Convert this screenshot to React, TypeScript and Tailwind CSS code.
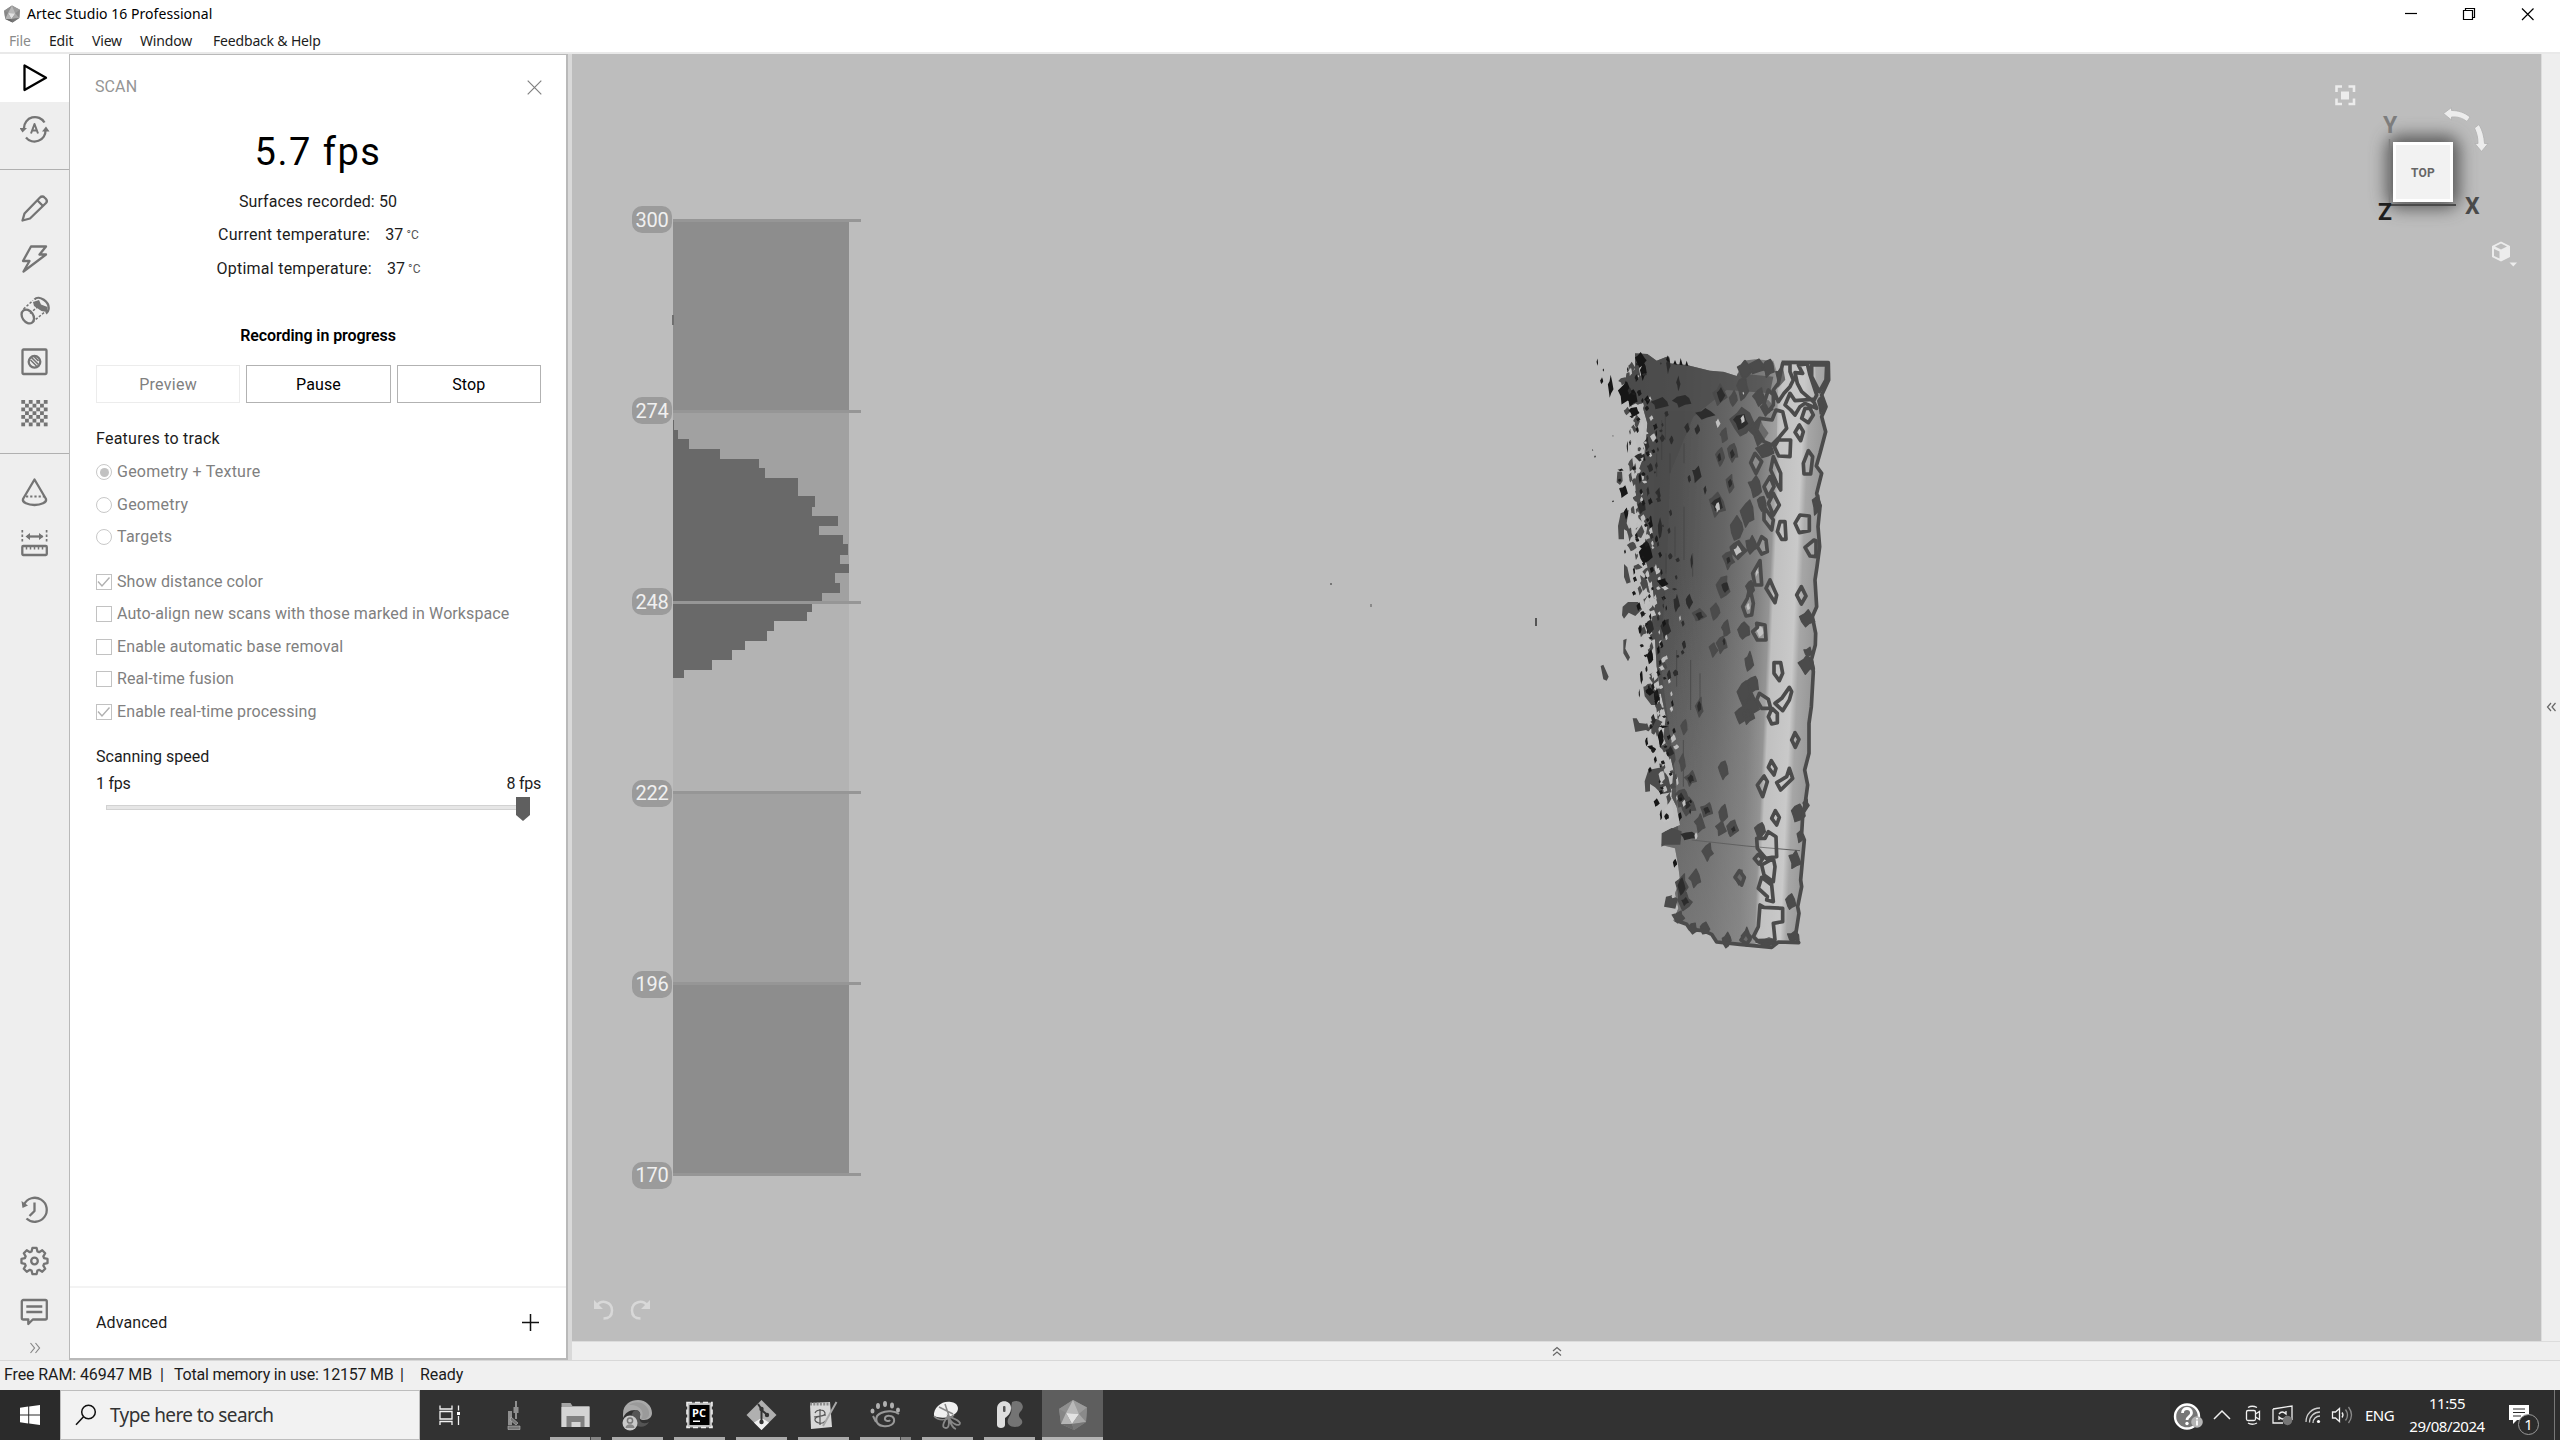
import React from "react";

type Pt = [number, number, number, number];

/* ---------- Toolbar icons ---------- */

function Ico({ children }: { children: React.ReactNode }) {
  return (
    <svg width="30" height="30" viewBox="0 0 30 30" fill="none" stroke="#747474" strokeWidth="2.300" strokeLinejoin="round">
      {children}
    </svg>
  );
}

const PlayIcon = () => (
  <Ico>
    <path d="M4.500 2.500v24.500l21.500-12.200z" stroke="#000" />
  </Ico>
);
const AutoIcon = () => (
  <Ico>
    <path d="M4 14A11 11 0 0 1 24.500 8.500M25.500 16A11 11 0 0 1 6 23.500" />
    <path d="M-0.500 14h7.500l-4.500 4.500zM22 17.500l7.500 0-3.500-5z" fill="#747474" stroke="none" />
    <path d="M11 19.500l3.500-9.500 3.500 9.500M12 16.500h5" strokeWidth="2" />
  </Ico>
);
const PencilIcon = () => (
  <Ico>
    <path d="M2.500 27.500L4.500 20.500 20 4.500a3 3 0 0 1 4.500 0l1.500 1.500a3 3 0 0 1 0 4L10 25.500z" />
    <path d="M17.500 7.500l5.500 5.500" />
  </Ico>
);
const BoltIcon = () => (
  <Ico>
    <path d="M11 2.500H26L19.500 10.500H26L3.500 27.500 9.500 17H3z" />
  </Ico>
);
const EraserIcon = () => (
  <Ico>
    <ellipse cx="7.800" cy="21.500" rx="5.500" ry="7.500" transform="rotate(-35 7.800 21.500)" />
    <path d="M14.500 4.500C19 -0.500 30 7 28.500 14.500c-0.300 1.800-1.200 3-2.500 4" />
    <path d="M13 7l6-2 2 4.500 6.500 2.500-0.500 5-5.500-1-7.500-5z" fill="#747474" stroke="none" />
    <path d="M3.500 14L13 5.500M12.500 27l13-10.500M10 18.500l8-7" strokeWidth="1.500" strokeDasharray="2.500 1.600" />
  </Ico>
);
const TargetIcon = () => (
  <Ico>
    <rect x="2.500" y="2.500" width="24" height="24.500" rx="1" />
    <circle cx="14.500" cy="14.800" r="5.800" />
    <path d="M10.500 13l6 6M11.500 10.500l7 7M14.500 10l4 4" strokeWidth="1.600" />
  </Ico>
);
const CheckerIcon = () => {
  const cells: React.ReactNode[] = [];
  for (let r = 0; r < 7; r++)
    for (let c = 0; c < 7; c++)
      if ((r + c) % 2 === 0) cells.push(<rect key={`${r}-${c}`} x={1.300 + c * 3.750} y={2 + r * 3.750} width="3.800" height="3.800" />);
  return (
    <svg width="30" height="30" viewBox="0 0 30 30" fill="#747474">
      {cells}
    </svg>
  );
};
const ConeIcon = () => (
  <Ico>
    <path d="M14.500 2.500L3 22c-1 3.500 5 6 11.500 6s12.500-2.500 11.500-6z" />
    <path d="M6 19.500h18" strokeWidth="2" strokeDasharray="2.200 2" />
  </Ico>
);
const MeasureIcon = () => (
  <Ico>
    <rect x="2.300" y="18" width="24.500" height="9" rx="1" />
    <path d="M6.500 18.500v3M10.500 18.500v3M14.500 18.500v3M18.500 18.500v3M22.500 18.500v3" strokeWidth="1.500" />
    <path d="M2.300 2v12.500M26.600 2v12.500" strokeDasharray="2.500 2" strokeWidth="1.700" />
    <path d="M7 8.500h15.500" />
    <path d="M5.500 8.500l4.500-3.500v7zM23.500 8.500l-4.500-3.500v7z" fill="#747474" stroke="none" />
  </Ico>
);
const HistoryIcon = () => (
  <Ico>
    <path d="M4 9.500A12 12 0 1 1 6.500 23.500" />
    <path d="M1.500 6l1 7 5.500-2.500z" fill="#747474" stroke="none" />
    <path d="M14.500 7.500v8.500l-5 5" />
  </Ico>
);
const GearIcon = () => {
  const pts: string[] = [];
  for (let i = 0; i < 8; i++) {
    const a = (i * Math.PI) / 4 - Math.PI / 2;
    const at = (d: number, r: number) => `${(14.500 + Math.cos(a + d) * r).toFixed(2)},${(15 + Math.sin(a + d) * r).toFixed(2)}`;
    pts.push(at(-0.300, 10), at(-0.160, 13.200), at(0.160, 13.200), at(0.300, 10));
  }
  return (
    <Ico>
      <polygon points={pts.join(" ")} />
      <circle cx="14.500" cy="15" r="3.300" />
    </Ico>
  );
};
const CommentIcon = () => (
  <Ico>
    <path d="M3.300 3h22a1.500 1.500 0 0 1 1.500 1.500v16.500a1.500 1.500 0 0 1-1.500 1.500H12.800l-4.500 4.500v-4.500H3.300A1.500 1.500 0 0 1 1.800 21V4.500A1.500 1.500 0 0 1 3.300 3z" />
    <path d="M6.300 9.500h16M6.300 15h16" />
  </Ico>
);

function Cell({ children }: { children: React.ReactNode }) {
  return <div className="flex h-[51.400px] w-full items-center justify-center">{children}</div>;
}

function Sidebar() {
  return (
    <nav className="flex w-[69px] shrink-0 flex-col items-center bg-[#eeeeee]">
      <div className="flex h-[48px] w-full items-center justify-center bg-white">
        <PlayIcon />
      </div>
      <div className="flex h-[67px] w-full justify-center pt-3">
        <AutoIcon />
      </div>
      <div className="h-px w-full bg-[#b0b0b0]" />
      <div className="mt-3 flex w-full flex-col">
        <Cell><PencilIcon /></Cell>
        <Cell><BoltIcon /></Cell>
        <Cell><EraserIcon /></Cell>
        <Cell><TargetIcon /></Cell>
        <Cell><CheckerIcon /></Cell>
      </div>
      <div className="mt-[14px] h-px w-full bg-[#b0b0b0]" />
      <div className="mt-3 flex w-full flex-col">
        <Cell><ConeIcon /></Cell>
        <Cell><MeasureIcon /></Cell>
      </div>
      <div className="mt-auto flex w-full flex-col">
        <Cell><HistoryIcon /></Cell>
        <Cell><GearIcon /></Cell>
        <Cell><CommentIcon /></Cell>
      </div>
      <div className="flex h-[22px] items-center pb-[2px]">
        <svg width="12" height="12" viewBox="0 0 12 12" fill="none" stroke="#858585" strokeWidth="1.200">
          <path d="M1.500 1l4 5-4 5M6.500 1l4 5-4 5" />
        </svg>
      </div>
    </nav>
  );
}

/* ---------- Scan panel ---------- */

function Radio({ label, on }: { label: string; on?: boolean }) {
  return (
    <div className="flex h-[32.500px] items-center tracking-[0.240px] text-[#808080]">
      <span className="mr-[5px] flex size-4 items-center justify-center rounded-full border border-[#c8c8c8]">
        {on && <span className="size-[9px] rounded-full bg-[#c2c2c2]" />}
      </span>
      {label}
    </div>
  );
}

function Check({ label, on }: { label: string; on?: boolean }) {
  return (
    <div className="flex h-[32.500px] items-center text-[#808080]">
      <span className="mr-[5px] flex size-4 items-center justify-center border border-[#c2c2c2]">
        {on && (
          <svg width="14" height="14" viewBox="0 0 14 14" fill="none" stroke="#b0b0b0" strokeWidth="1.400">
            <path d="M1 6.500l4 4.500 7.500-8.500" />
          </svg>
        )}
      </span>
      {label}
    </div>
  );
}

function Temp({ label }: { label: string }) {
  return (
    <div className="flex h-[34px] items-center justify-center pl-px">
      <span className="tracking-[0.250px]">{label}</span>
      <span className="ml-[15px]">37</span>
      <span className="ml-[3px] text-[12px] text-[#555]">°C</span>
    </div>
  );
}

function ScanPanel() {
  return (
    <section className="flex w-[499px] shrink-0 flex-col border-2 border-t border-l border-[#b9b9b9] bg-white text-[16px] leading-none tracking-[0.100px] text-[#1c1c1c]">
      <div className="flex h-[63px] items-center justify-between px-[25px] text-[#959595]">
        <span>SCAN</span>
        <svg width="15" height="15" viewBox="0 0 15 15" stroke="#808080" strokeWidth="1.200" className="-mr-px mt-px">
          <path d="M0.700 0.700l13.600 13.600M14.300 0.700L0.700 14.300" />
        </svg>
      </div>
      <div className="flex h-[66px] items-center justify-center pt-[2px] text-[38px] tracking-[1.500px] text-black">5.7 fps</div>
      <div className="flex h-[34px] items-center justify-center pt-px">Surfaces recorded: 50</div>
      <Temp label="Current temperature:" />
      <Temp label="Optimal temperature:" />
      <div className="mt-8 flex h-9 items-center justify-center font-semibold tracking-[-0.080px] text-black">Recording in progress</div>
      <div className="mt-[11px] flex gap-[6px] pr-[25px] pl-[26px]">
        <button className="h-[38px] flex-1 border border-[#ececec] pt-[2px] tracking-[0.300px] text-[#808080]">Preview</button>
        <button className="h-[38px] flex-1 border border-[#b2b2b2] pt-[2px] text-black">Pause</button>
        <button className="h-[38px] flex-1 border border-[#b2b2b2] pt-[2px] text-black">Stop</button>
      </div>
      <div className="pr-[25px] pl-[26px]">
        <div className="mt-[17px] flex h-9 items-center pt-px tracking-[0.250px]">Features to track</div>
        <Radio label="Geometry + Texture" on />
        <Radio label="Geometry" />
        <Radio label="Targets" />
        <div className="h-3" />
        <Check label="Show distance color" on />
        <Check label="Auto-align new scans with those marked in Workspace" />
        <Check label="Enable automatic base removal" />
        <Check label="Real-time fusion" />
        <Check label="Enable real-time processing" on />
        <div className="mt-[13px] flex h-[32px] items-center tracking-[0]">Scanning speed</div>
        <div className="flex h-[22px] items-center justify-between tracking-[-0.250px]">
          <span>1 fps</span>
          <span>8 fps</span>
        </div>
        <div className="relative mt-[6px] ml-[10px] flex h-[12px] w-[424px] items-center">
          <div className="h-[5px] w-full border border-[#d2d2d2] bg-[#e6e6e6]" />
          <svg width="14" height="24" viewBox="0 0 14 24" className="absolute top-[-4px] right-0">
            <path d="M0 0h14v18l-7 6-7-6z" fill="#5f5f5f" />
          </svg>
        </div>
      </div>
      <div className="mt-auto flex h-[72px] items-center justify-between border-t-2 border-[#f3f3f3] pr-[27px] pl-[26px]">
        <span>Advanced</span>
        <svg width="17" height="17" viewBox="0 0 17 17" stroke="#111" strokeWidth="1.500" className="mb-px">
          <path d="M8.500 0v17M0 8.500h17" />
        </svg>
      </div>
    </section>
  );
}

/* ---------- Distance histogram ---------- */

const histEdges = [660, 690, 717, 747, 777, 803, 833, 889, 918, 948, 975, 1005, 1032, 1062, 1092, 1118, 1148, 1178, 1206, 1234, 1260, 1290, 1320, 1347, 1377, 1407, 1433];
const histEnds = [161, 173, 207, 300, 417, 435, 533, 585, 575, 653, 597, 668, 683, 660, 686, 645, 660, 604, 575, 559, 462, 439, 375, 334, 274, 191];

function Histogram() {
  const bands = ["#8d8d8d", "#a1a1a1", "#b3b3b3", "#a1a1a1", "#8d8d8d"];
  return (
    <div className="absolute top-[152px] left-[60px] flex">
      <div className="flex flex-col justify-between">
        {["300", "274", "248", "222", "196", "170"].map((n) => (
          <div key={n} className="flex h-[27px] w-[40px] items-center justify-center rounded-[10px] bg-[#9b9b9b] text-[20px] leading-none tracking-[-0.200px] text-[#f0f0f0]">
            {n}
          </div>
        ))}
      </div>
      <svg width="190" height="983" viewBox="0 0 190 983" shapeRendering="crispEdges">
        {bands.map((c, i) => (
          <rect key={i} x="0.500" y={14.500 + i * 191} width="176.500" height="191" fill={c} />
        ))}
        <rect x="0" y="109" width="2" height="10" fill="#707070" />
        {histEnds.map((e, i) => (
          <rect
            key={i}
            x="0.500"
            y={histEdges[i] / 3 - 6}
            width={(e - 157) / 3}
            height={(histEdges[i + 1] - histEdges[i]) / 3 + 0.500}
            fill="#696969"
          />
        ))}
        {[0, 1, 2, 3, 4, 5].map((i) => (
          <rect key={i} x="0.500" y={13 + i * 190.800} width="188" height="3" fill="#969696" />
        ))}
      </svg>
    </div>
  );
}

/* ---------- Scanned surface ---------- */

const outline =
  "M225 40L262 42 290 62 320 50 328 70 345 72 380 75 450 92 490 95 530 108 550 62 585 58 640 62 652 100 665 65 805 66 808 120 785 165 800 200 785 230 798 275 780 340 768 378 785 400 770 460 782 500 775 560 780 620 772 680 765 720 772 800 755 830 768 880 768 915 752 960 762 995 755 1100 748 1150 748 1240 732 1290 745 1335 735 1400 728 1430 725 1480 735 1500 722 1620 725 1640 712 1700 718 1720 705 1790 718 1810 655 1808 635 1825 580 1820 540 1816 470 1808 455 1785 430 1772 390 1770 380 1755 340 1742 355 1705 345 1660 360 1620 355 1580 345 1525 305 1515 315 1475 360 1455 350 1400 335 1370 340 1290 330 1240 310 1190 318 1130 300 1050 290 980 285 900 270 860 285 800 275 720 250 640 262 560 232 510 225 420 255 340 262 250 245 190 215 200 190 150 200 100 225 90z";

const rightEdge =
  "M665 67L805 68 806 120 785 165 798 200 785 230 797 275 780 340 769 378 785 400 770 460 780 500 774 560 779 620 771 680 765 720 770 800 757 830 767 880 766 915 754 960 760 995 754 1100 747 1150 747 1240 734 1290 743 1335 734 1400 728 1430 725 1480 733 1500 722 1620 725 1640 713 1700 717 1720 706 1790 716 1808 655 1806 635 1822 580 1817 540 1813 470 1806 455 1783 430 1772 390 1768 380 1753 345 1740";

/* Openings with a lighter inside, drawn with a thick rim */
const openings: string[] = [
  "M668 70L655 130 640 150 655 185 672 160 690 140 700 120 690 95 690 72z",
  "M715 75L728 100 705 98 712 130 725 155 760 185 770 165 750 105 742 72z",
  "M755 75L755 110 778 155 798 120 800 75z",
  "M690 160L675 195 692 210 705 225 720 200 735 190 770 205 758 178 705 182z",
  "M625 150L612 190 625 215 640 195 640 165z",
  "M648 210L636 240 600 235 590 270 612 305 635 315 655 295 680 265 668 215z",
  "M735 205L725 235 745 248 760 225 750 205z",
  "M718 255L705 277 722 302 730 275z",
  "M655 300L643 320 656 348 690 350 692 300z",
  "M585 340L572 368 588 400 605 365z",
  "M640 350L632 390 650 430 662 450 662 400z",
  "M630 410L612 440 625 470 642 440z",
  "M640 460L625 490 640 525 658 495z",
  "M612 500L612 540 635 570 640 540z",
  "M660 545L652 575 665 598 678 598 675 545z",
  "M720 525L705 550 718 578 748 572 748 528z",
  "M762 600L735 622 750 648 768 650 768 602z",
  "M745 332L730 370 732 402 752 402 758 350z",
  "M605 590L592 620 605 642 622 635 618 600z",
  "M600 662L578 700 585 735 605 735z",
  "M630 720L618 745 645 788 650 765z",
  "M724 740L710 765 724 792 738 768z",
  "M570 745L562 775 548 800 558 828 575 825 580 790z",
  "M590 850L592 862 578 875 592 900 618 900 615 855z",
  "M642 968L642 1000 658 1022 668 1000 662 968z",
  "M598 1060L590 1080 605 1105 632 1105 625 1078z",
  "M688 1042L665 1075 645 1090 668 1112 688 1080 695 1055z",
  "M636 1105L625 1130 635 1152 652 1148 652 1120z",
  "M705 1178L695 1200 706 1222 717 1198z",
  "M634 1262L625 1282 642 1305 648 1285z",
  "M612 1308L592 1335 608 1370 622 1325z",
  "M688 1285L680 1310 650 1328 662 1350 698 1315z",
  "M646 1412L635 1435 650 1455 658 1432z",
  "M625 1475L615 1495 590 1495 592 1525 618 1555 650 1550 648 1490z",
  "M595 1543L583 1556 597 1572 608 1556z",
  "M640 1555L605 1575 612 1605 640 1625 645 1580z",
  "M605 1612L595 1645 622 1670 620 1680 640 1685 635 1635z",
  "M600 1695L595 1760 580 1790 592 1802 645 1800 640 1750 668 1745 668 1705 612 1702z",
  "M538 1592L525 1612 545 1635 553 1612z",
  "M558 1778L543 1800 560 1812 570 1798z",
];

/* Solid flakes: centre x, centre y, width, height */
const flakes: Pt[] = [
  [555, 90, 50, 60], [590, 80, 55, 50], [625, 85, 40, 60], [480, 165, 45, 70], [548, 145, 38, 80], [597, 170, 40, 60],
  [520, 175, 25, 50], [545, 245, 75, 90], [595, 275, 60, 90], [620, 205, 40, 50], [660, 110, 30, 70], [518, 338, 35, 60], [480, 350, 28, 60],
  [492, 285, 24, 50], [585, 440, 45, 70], [510, 430, 26, 60], [472, 495, 55, 80], [562, 520, 45, 90], [530, 565, 40, 80],
  [615, 330, 60, 50], [605, 490, 30, 50], [535, 630, 55, 60], [575, 615, 40, 60], [505, 660, 40, 60], [490, 740, 45, 75], [570, 745, 28, 50],
  [465, 815, 30, 55], [418, 825, 45, 40], [498, 865, 28, 55], [552, 872, 40, 55], [485, 915, 35, 55], [460, 930, 28, 45], [568, 965, 28, 65],
  [740, 975, 55, 60], [742, 835, 50, 55], [770, 495, 30, 70], [785, 195, 28, 60], [578, 1035, 40, 60], [555, 1060, 50, 80], [570, 1100, 60, 90],
  [548, 1125, 50, 60], [565, 1130, 40, 50], [418, 1100, 25, 65], [372, 1160, 20, 50], [490, 1290, 32, 60], [392, 1315, 38, 50], [367, 1268, 20, 55], [365, 1375, 45, 60],
  [385, 1400, 50, 60], [440, 1410, 40, 50], [490, 1420, 28, 60], [420, 1450, 35, 60], [483, 1465, 35, 50], [518, 1465, 38, 55], [600, 1470, 35, 50],
  [715, 1420, 45, 60], [705, 1560, 42, 60], [443, 1535, 36, 60], [405, 1615, 38, 60], [365, 1640, 40, 90], [375, 1685, 45, 60], [693, 1685, 35, 50],
  [700, 1790, 40, 40], [620, 1808, 70, 32], [500, 1800, 28, 50], [435, 1765, 30, 40], [400, 1765, 30, 36], [355, 1730, 40, 40], [540, 1612, 30, 50],
  [560, 1790, 34, 60], [745, 935, 30, 30], [738, 1395, 20, 40], [720, 1490, 20, 40],
];

/* Darker cores and blotches */
const cores: Pt[] = [
  [483, 165, 28, 50], [300, 190, 60, 42], [366, 184, 64, 42], [436, 222, 66, 38], [542, 245, 50, 55], [381, 263, 18, 36], [412, 268, 18, 34], [334, 300, 14, 28], [355, 130, 14, 50],
  [325, 75, 14, 60], [410, 403, 32, 60], [388, 417, 12, 26], [435, 450, 10, 30], [472, 492, 40, 50], [270, 383, 22, 30], [296, 460, 14, 42],
  [264, 455, 10, 34], [245, 500, 28, 50], [300, 565, 14, 70], [327, 572, 10, 22], [495, 742, 26, 36], [388, 785, 24, 50], [350, 790, 22, 60],
  [418, 828, 28, 30], [318, 862, 36, 60], [268, 862, 30, 50], [510, 430, 14, 30], [517, 342, 16, 32], [478, 352, 14, 30], [418, 1100, 14, 36], [327, 1008, 14, 40],
  [280, 1140, 16, 40], [330, 1235, 28, 36], [392, 1317, 22, 30], [362, 1372, 28, 30], [382, 1395, 22, 30], [440, 1412, 24, 26], [385, 1488, 55, 30], [365, 1640, 26, 60],
  [375, 1685, 26, 30], [395, 665, 8, 50], [505, 662, 14, 26], [260, 310, 20, 50], [240, 350, 36, 30], [372, 915, 14, 30], [520, 1468, 16, 24], [492, 905, 10, 24],
];

/* Black debris along the left side */
const debris: Pt[] = [
  [242, 60, 38, 50], [195, 160, 46, 80], [215, 175, 40, 60], [152, 140, 18, 75], [222, 215, 36, 34], [112, 66, 5, 24], [125, 122, 10, 22], [130, 90, 4, 10],
  [262, 180, 20, 30], [250, 95, 22, 60], [190, 455, 30, 44], [240, 415, 10, 34], [198, 520, 14, 40], [272, 552, 16, 28], [222, 692, 8, 26], [308, 727, 40, 28],
  [222, 760, 14, 16], [236, 800, 14, 30], [240, 868, 10, 30], [270, 950, 22, 50], [244, 1012, 10, 46], [270, 1055, 30, 26], [290, 1070, 20, 60], [272, 1222, 24, 14],
  [260, 1205, 10, 30], [302, 1195, 20, 60], [280, 1228, 18, 14], [290, 1388, 20, 28], [303, 1425, 8, 36], [320, 1430, 16, 22], [286, 1260, 10, 24], [310, 1160, 34, 8],
  [238, 1060, 4, 30], [270, 1290, 12, 20], [98, 330, 4, 4], [105, 350, 5, 8], [159, 288, 4, 4], [159, 484, 6, 6], [195, 635, 6, 14], [312, 850, 14, 26], [345, 1570, 14, 30], [360, 1430, 12, 30],
  [210, 275, 4, 20], [202, 320, 4, 40], [232, 270, 10, 20], [182, 390, 20, 10], [232, 600, 14, 12], [275, 690, 14, 20], [250, 820, 20, 6], [295, 930, 10, 34], [258, 640, 46, 70], [252, 622, 30, 34],
];

/* Loose grey fragments left of the surface */
const fragments =
  "M172 395l14 0 2 28-8 12-10-8zM182 520l24-10-6 40 12 30-20-12 0 30-16 0-2-40zM225 585l20-30 8 20-10 20zM192 672l10 10 10 45-12 4-8-20zM188 800l16-14 30 0 12 22-20 20-20-10-14 18-6-10zM190 900l10-4-4 30 14 26-6 12-14-24zM122 978l8-4 16 36-6 12-10-4zM218 1135l12 0 8 14 20 2 30-15 20 10-26 38-24-14-32 6zM265 1290l40-8 20 30 10 45-30 5-20-20-15-10 0 22-14 2-2-32zM305 1480l30-16 30 10-4 40-45 0-12 6zM318 1670l18-4 18 10-8 30-34-6zM250 1040l20-5 30 30 0 30-26 0-20-26zM240 705l20 15 10 40-20-10zM300 1640l-4 0z";

/* See-through spots */
const spots: Pt[] = [
  [474, 250, 16, 30], [548, 238, 14, 30], [473, 502, 16, 36], [533, 632, 26, 34], [222, 545, 40, 60], [220, 320, 30, 60], [245, 265, 14, 60], [242, 90, 10, 40],
  [315, 744, 24, 16], [262, 790, 20, 50], [255, 760, 20, 40], [262, 900, 24, 50], [250, 930, 30, 70], [276, 820, 30, 24], [285, 1000, 20, 50], [270, 1190, 20, 60], [305, 1250, 30, 50],
  [372, 1390, 12, 24], [408, 1488, 10, 24], [328, 1415, 30, 70], [305, 1310, 22, 40], [285, 1120, 10, 20], [338, 1660, 8, 20], [590, 695, 12, 30], [565, 800, 12, 24], [600, 875, 26, 34],
  [225, 200, 26, 20], [270, 178, 10, 20], [200, 410, 20, 34], [245, 480, 10, 20], [262, 705, 14, 30], [550, 160, 6, 10], [340, 1670, 12, 12], [360, 835, 6, 20], [315, 1440, 20, 20], [250, 850, 10, 14],
];

function noise(n: number) {
  const v = Math.sin(n * 12.9898) * 43758.5453;
  return v - Math.floor(v);
}

/* Irregular eight-corner shards */
function shards(list: Pt[]) {
  return list
    .map(([x, y, w, h], i) => {
      const corners: string[] = [];
      for (let k = 0; k < 8; k++) {
        const t = (k * Math.PI) / 4 + noise(i * 9 + k) * 0.500;
        const r = k % 2 === 0 ? 0.950 : 0.500 + noise(i * 17 + k * 3) * 0.350;
        corners.push(`${(x + (Math.sin(t) * w * r) / 2).toFixed(1)} ${(y - (Math.cos(t) * h * r) / 2).toFixed(1)}`);
      }
      return `M${corners.join("L")}z`;
    })
    .join("");
}

/* Left border of the surface by height, used to break it up */
const border: [number, number][] = [[60, 235], [150, 195], [250, 255], [340, 250], [420, 220], [510, 230], [600, 250], [720, 270], [800, 280], [900, 285], [1050, 300], [1190, 312], [1290, 335], [1400, 350], [1525, 345], [1740, 350]];

function borderX(y: number) {
  for (let i = 1; i < border.length; i++) {
    const [y0, x0] = border[i - 1];
    const [y1, x1] = border[i];
    if (y <= y1) return x0 + ((x1 - x0) * (y - y0)) / (y1 - y0);
  }
  return 350;
}

function scatter(seed: number, count: number, from: number, to: number, size: number, yMax: number): Pt[] {
  const out: Pt[] = [];
  for (let i = 0; i < count; i++) {
    const y = 70 + ((yMax - 70) * (i + noise(seed + i))) / count;
    const x = borderX(y) + from + (to - from) * noise(seed * 3 + i * 7);
    out.push([x, y, size * (0.400 + noise(seed + i * 5)), size * (0.600 + noise(seed + i * 11) * 1.600)]);
  }
  return out;
}

function ScanSurface() {
  return (
    <svg width="300" height="620" viewBox="0 0 900 1860" className="absolute top-[286px] left-[988px]">
      <defs>
        <linearGradient id="shade" gradientUnits="userSpaceOnUse" x1="200" y1="0" x2="820" y2="0" gradientTransform="translate(18 0) skewX(-2.500)">
          <stop offset="0" stopColor="#4a4a4a" />
          <stop offset="0.250" stopColor="#525252" />
          <stop offset="0.480" stopColor="#656565" />
          <stop offset="0.640" stopColor="#7c7c7c" />
          <stop offset="0.715" stopColor="#949494" />
          <stop offset="0.735" stopColor="#c0c0c0" />
          <stop offset="0.840" stopColor="#c9c9c9" />
          <stop offset="0.870" stopColor="#a6a6a6" />
          <stop offset="1" stopColor="#8c8c8c" />
        </linearGradient>
        <linearGradient id="lift" gradientUnits="userSpaceOnUse" x1="0" y1="700" x2="0" y2="1800">
          <stop offset="0" stopColor="#8f8f8f" stopOpacity="0" />
          <stop offset="1" stopColor="#8f8f8f" stopOpacity="0.500" />
        </linearGradient>
        <clipPath id="body">
          <path d={outline} />
        </clipPath>
      </defs>
      <path d={outline} fill="url(#shade)" />
      <g clipPath="url(#body)">
        <path d="M280 700H600L585 1860H280z" fill="url(#lift)" />
        <path d="M180 40H450L460 92 640 110 630 160 500 150 400 230 330 400 320 700 300 960 345 1300 355 1480 300 1500 180 900z" fill="#4b4b4b" opacity="0.700" />
        <path d="M655 60H765L770 200 725 260 720 350H650z" fill="#c8c8c8" opacity="0.600" />
        <path d="M395 1500Q560 1520 720 1532" stroke="#606060" strokeWidth="3" fill="none" />
        <path d="M305 240v120M316 220v80M290 340v70M372 310v60M330 340v60M345 560v90M372 500v160M398 640v70M318 640v60M350 930v110M392 960v150M420 1000v80M370 1200v140" stroke="#3e3e3e" strokeWidth="3" opacity="0.600" />
      </g>
      <path d={fragments} fill="#4b4b4b" />
      <path d={shards(scatter(3, 60, -38, 14, 24, 1380))} fill="#4b4b4b" />
      <path d={shards(flakes)} fill="#4b4b4b" stroke="#4b4b4b" strokeWidth="4" strokeLinejoin="round" />
      <path d={shards(cores)} fill="#2c2c2c" />
      <path d={shards(spots)} fill="#c0c0c0" />
      <path d={shards(scatter(41, 75, -40, 35, 15, 1400))} fill="#bdbdbd" />
      <path d={shards(debris)} fill="#161616" />
      <path d={shards(scatter(97, 75, -45, 45, 12, 1420))} fill="#1c1c1c" />
      <path d={shards(scatter(151, 30, 10, 100, 13, 1000))} fill="#2e2e2e" />
      <path d="M318 60l5-14 5 20zM340 72l5-12 6 14zM358 74l4-20 6 22zM376 76l4-14 5 16z" fill="#161616" />
      <path d={openings.join("")} fill="#c8c8c8" fillOpacity="0.250" stroke="#4b4b4b" strokeWidth="11" strokeLinejoin="round" />
      <path d={rightEdge} fill="none" stroke="#4b4b4b" strokeWidth="11" strokeLinejoin="round" />
    </svg>
  );
}

/* ---------- Viewport ---------- */

function NavCube() {
  return (
    <>
      <div className="absolute top-[90px] left-[1823px] size-[56px] rounded-md shadow-[0_0_16px_9px_rgba(70,70,70,0.800)]" />
      <svg width="200" height="240" viewBox="2330 70 200 240" className="absolute top-[16px] left-[1758px]">
        <g stroke="#ececec" strokeWidth="2.600" fill="none">
          <path d="M2336.500 92v-5.500h5.500M2348.500 86.500h5.500v5.500M2354 98.500v5.500h-5.500M2342 104h-5.500v-5.500" />
        </g>
        <rect x="2341" y="91.500" width="8" height="8" fill="#ececec" />
        <path d="M2443.500 113.500l8-6v3c7 0 13 2 18.500 6.500l-3 4.500c-5-3.500-9-5-15.500-4.500v3z" fill="#ececec" stroke="#b0b0b0" strokeWidth="0.800" />
        <path d="M2481.500 151.500l-6.500-8h3c0-6-1-10-3.500-15.500l4.500-3.500c3.500 6 5 12 5.500 19h3.500z" fill="#ececec" stroke="#b0b0b0" strokeWidth="0.800" />
        <path d="M2389.500 139v66" stroke="#808080" strokeWidth="1.500" />
        <path d="M2501 241.500l9 4.500v11l-9 4.500-9-4.500v-11z" fill="#ececec" />
        <path d="M2501 243.500l6 3-6 3-6-3zM2494 249l5.500 2.500v7l-5.500-2.500z" fill="#bdbdbd" />
        <path d="M2509.500 262.500h7.500l-3.700 4z" fill="#ececec" />
      </svg>
      <div className="absolute top-[88px] left-[1821px] flex size-[60px] items-center justify-center border-[3px] border-white bg-[#f2f2f2] pt-[2px] text-[12px] leading-none font-bold tracking-[0.300px] text-[#666]">TOP</div>
      <div className="absolute top-[150px] left-[1818px] h-[2px] w-[66px] bg-[#4a4a4a]" />
      <div className="absolute top-[60px] left-[1811px] text-[23px] leading-none font-bold text-[#7d7d7d]">Y</div>
      <div className="absolute top-[147px] left-[1806px] text-[23px] leading-none font-bold text-[#1e1e1e]">Z</div>
      <div className="absolute top-[141px] left-[1893px] text-[23px] leading-none font-bold text-[#4a4a4a]">X</div>
    </>
  );
}

function Viewport() {
  return (
    <main className="relative flex-1 overflow-hidden bg-[#bdbdbd]">
      <Histogram />
      <ScanSurface />
      <NavCube />
      <span className="absolute top-[529px] left-[758px] size-[2px] bg-[#777]" />
      <span className="absolute top-[550px] left-[798px] h-[3px] w-[2px] bg-[#8a8a8a]" />
      <span className="absolute top-[564px] left-[963px] h-[8px] w-[2px] bg-[#555]" />
      <svg width="64" height="26" viewBox="0 0 64 26" className="absolute bottom-[18px] left-[18px]" fill="none" stroke="#d8d8d8" strokeWidth="2.500">
        <path d="M7 8.500C11 2.500 22 4 22 13.500c0 5-3 8-8.500 8M57 8.500C53 2.500 42 4 42 13.500c0 5 3 8 8.500 8" />
        <path d="M4 3v9h9zM60 3v9h-9z" fill="#d8d8d8" stroke="none" />
      </svg>
    </main>
  );
}

/* ---------- Taskbar ---------- */

function Task({ children, open = true, active = false, split = false }: { children?: React.ReactNode; open?: boolean; active?: boolean; split?: boolean }) {
  return (
    <div className={active ? "relative flex h-full w-[61px] items-center justify-center bg-[#5e5e5e]" : "relative flex h-full w-[62px] items-center justify-center"}>
      <svg width="32" height="32" viewBox="0 0 32 32">{children}</svg>
      {open && <span className={active ? "absolute bottom-0 left-0 h-[3px] w-full bg-[#b4b4b4]" : "absolute bottom-0 left-[6px] h-[3px] w-[51px] bg-[#ababab]"} />}
      {split && <span className="absolute bottom-0 left-[46px] h-[3px] w-[11px] border-l border-[#444] bg-[#858585]" />}
    </div>
  );
}

function ArtecGem() {
  return (
    <>
      <path d="M16 1L30 8.500 29 23 17 31 4 25 2 10z" fill="#8a8a8a" />
      <path d="M16 1L2 10l7 4z" fill="#8f8f8f" />
      <path d="M16 1l14 7.500-8 6.500z" fill="#9c9c9c" />
      <path d="M16 1L9 14l13 1z" fill="#b9b9b9" />
      <path d="M2 10l7 4-5 11z" fill="#868686" />
      <path d="M9 14l13 1-7 10z" fill="#e2e2e2" />
      <path d="M9 14l6 11-11 0z" fill="#b4b4b4" />
      <path d="M22 15l8-6.500L29 23z" fill="#8a8a8a" />
      <path d="M22 15l7 8-14 2z" fill="#a8a8a8" />
      <path d="M4 25l11 0 2 6z" fill="#6a6a6a" />
      <path d="M15 25l14-2-12 8z" fill="#767676" />
    </>
  );
}

function Taskbar() {
  return (
    <footer className="flex h-[50px] items-stretch bg-[#323232] text-white">
      <div className="flex w-[60px] items-center justify-center bg-[#2b2b2b]">
        <svg width="20" height="20" viewBox="0 0 20 20" fill="#fff">
          <path d="M0 2.800l8.200-1.200v7.900H0zM9.200 1.400L20 0v9.500H9.200zM0 10.500h8.200v7.900L0 17.200zM9.200 10.500H20V20L9.200 18.500z" />
        </svg>
      </div>
      <div className="flex w-[360px] items-center border border-[#bdbdbd] bg-[#f2f2f2] pl-[14px] font-['Noto_Sans'] text-[19px] tracking-[-0.600px] text-[#333]">
        <svg width="22" height="22" viewBox="0 0 22 22" fill="none" stroke="#111" strokeWidth="1.500" className="mr-[13px]">
          <circle cx="13.500" cy="8" r="6.800" />
          <path d="M8.500 12.800L1 20.800" />
        </svg>
        <span className="pt-px">Type here to search</span>
      </div>
      <div className="flex">
        <Task open={false}>
          <g fill="none" stroke="#f2f2f2" strokeWidth="1.300">
            <path d="M5 6.500V10h12V6.500M5 26v-3.500h12V26M5 12.500h12v7.500H5z" />
            <path d="M23.500 6.500v5M23.500 17v9" />
          </g>
          <rect x="22" y="13" width="3" height="3" fill="#fff" />
        </Task>
        <Task open={false}>
          <path d="M18 2h2v18h-2zM11 12h4v14h-4zM16.500 8h5v6h-5z" fill="#8f8f8f" />
          <path d="M11 27h12v3.500H11zM14 18l7 6-2 2-6-5z" fill="#777" stroke="#bbb" strokeWidth="0.600" />
        </Task>
        <Task split>
          <path d="M2.500 4h9l2 3h17v21H2.500z" fill="#a5a5a5" />
          <path d="M2.500 8h28v20h-28z" fill="#d4d4d4" />
          <path d="M7.500 28V17h18v11h-4v-5h-9v5z" fill="#808080" />
        </Task>
        <Task>
          <path d="M2 15C2 5 10 1 17 1c8 0 14 6 14 13 0 4-3 7-8 7-4 0-5-2-4-4 1-3-1-6-5-6-6 0-10 3-12 8z" fill="#a9a9a9" />
          <path d="M14 11c-5 3-5 12 2 16 5 2 10 0 12-4-6 3-11 0-9-6 1-3-1-6-5-6z" fill="#555" />
          <path d="M8 6c6-5 18-3 20 7 1 5-3 8-8 7 5-7-2-15-12-14z" fill="#9a9a9a" />
          <circle cx="9" cy="24" r="7.500" fill="#c9c9c9" />
          <circle cx="9" cy="21.500" r="2.600" fill="none" stroke="#777" strokeWidth="1.500" />
          <path d="M4.500 29c0-5 9-5 9 0z" fill="#888" />
        </Task>
        <Task>
          <rect x="4" y="3.500" width="25" height="25" fill="#bdbdbd" stroke="#eee" strokeDasharray="5 3" strokeWidth="1.600" />
          <rect x="6.500" y="6" width="20" height="20" fill="#000" />
          <text x="9" y="17.500" fontSize="11" fontWeight="700" fill="#fff" fontFamily="Open Sans">PC</text>
          <rect x="10" y="21.500" width="7" height="1.500" fill="#fff" />
        </Task>
        <Task>
          <path d="M16.500 1l15 15-15 15-15-15z" fill="#b0b0b0" />
          <path d="M16.500 19l7.500 4.500-7.500 7.500-7.500-7.500z" fill="#f0f0f0" />
          <path d="M13 5l3.500 5v13M16.500 11l6 5" stroke="#333" strokeWidth="2" fill="none" />
          <circle cx="16.500" cy="10" r="2.200" fill="#333" />
          <circle cx="22" cy="16" r="2.200" fill="#333" />
          <circle cx="16.500" cy="23" r="2.200" fill="#333" />
        </Task>
        <Task>
          <path d="M3 4l20-1 2 25-21 2z" fill="#d8d8d8" />
          <path d="M3 5h20" stroke="#8a8a8a" strokeWidth="3" strokeDasharray="2 1.300" />
          <path d="M8 14c2-4 9-4 10 0s-9 2-10 6 8 6 10 2M7 18l12-2M13 10v16" stroke="#555" strokeWidth="1.200" fill="none" />
          <path d="M29.500 3L16 27" stroke="#a8a8a8" strokeWidth="2" />
        </Task>
        <Task split>
          <g fill="none" stroke="#999" strokeWidth="2">
            <path d="M30 15c-4-3-12-4-18-1-7 3-6 12 2 13 7 1 12-2 11-7-1-4-8-4-9-1s4 4 5 2" />
            <path d="M4 17l3 6" />
          </g>
          <g fill="#b0b0b0">
            <ellipse cx="3.500" cy="12" rx="2" ry="2.500" />
            <ellipse cx="9" cy="7" rx="2" ry="3" />
            <ellipse cx="16" cy="5" rx="2" ry="3" />
            <ellipse cx="23" cy="6.500" rx="2" ry="3" />
            <ellipse cx="29" cy="11" rx="2" ry="2.500" />
          </g>
        </Task>
        <Task>
          <path d="M3 17C2 8 12 1 20 3c7 1 9 7 5 11-5 5-15 6-22 3z" fill="#f0f0f0" />
          <path d="M3 17c4 5 14 5 20-1M8 8l14 7M14 5l4 12" stroke="#888" strokeWidth="1.500" fill="none" />
          <path d="M17 17c-6 8-6 12-2 12s3-8 2-12c4 2 10 3 12 7 0 4-8 2-12-7zM17 17c2 6 4 12 8 13" stroke="#888" strokeWidth="1.800" fill="none" />
        </Task>
        <Task>
          <path d="M19 3c8-4 14 4 9 9-2 2-3 4-1 7 5 4 1 9-5 9-7 0-9-5-6-10 2-3 3-6 2-9z" fill="#747474" />
          <path d="M4 26V10C4 0 18 0 18 9c0 5-3 8-6 10v7c0 4-8 4-8 0z" fill="#dedede" />
          <rect x="10" y="7" width="2.500" height="6" rx="1" fill="#555" />
        </Task>
        <div className="ml-[2px]">
          <Task active>
            <ArtecGem />
          </Task>
        </div>
      </div>
      <div className="ml-auto flex items-center bg-[#2d2d2d] font-['Noto_Sans'] text-[15px] leading-none">
        <svg width="190" height="50" viewBox="2170 1390 190 50" fill="none" stroke="#f0f0f0" strokeWidth="1.300">
          <circle cx="2187" cy="1416.500" r="12" fill="#777" stroke="#fff" strokeWidth="2.400" />
          <path d="M2182.500 1413c0-6 9-6 9 0 0 3.500-4.500 3.500-4.500 7" stroke="#fff" strokeWidth="2.800" />
          <circle cx="2187" cy="1423.500" r="1.700" fill="#fff" stroke="none" />
          <circle cx="2197" cy="1422" r="5.800" fill="#b5b5b5" stroke="none" />
          <path d="M2197 1420.500v5M2197 1418v1.500" stroke="#fff" strokeWidth="1.800" />
          <path d="M2214 1419l8-8 8 8" strokeWidth="1.500" />
          <rect x="2246.500" y="1410.500" width="9" height="10" rx="1.500" />
          <path d="M2255.500 1414l4-2.500v8l-4-2.500M2248 1407.500q4-2.500 9 0M2248 1423q4 2.500 9 0" />
          <path d="M2273 1409l19-3v14M2273 1409v14h10M2279 1414q3-4 7 0v-3M2286 1417q-3 4-7 0v3" />
          <circle cx="2287.500" cy="1420.500" r="4.700" fill="#757575" stroke="none" />
          <path d="M2306 1422c0-8 6-14 14-14M2309.500 1422.500c0-6 4.500-10.500 10.500-10.500M2313 1423c0-4 3-7 7-7" stroke="#cfcfcf" />
          <circle cx="2318.500" cy="1421.500" r="1.600" fill="#fff" stroke="none" />
          <path d="M2332.500 1412h3l4-3.500v13l-4-3.500h-3zM2342 1412.500q2 2.500 0 5" />
          <path d="M2345.500 1409.500q4 5.500 0 11M2348.500 1407q6 8 0 16" stroke="#8a8a8a" />
        </svg>
        <span className="ml-[5px] w-[30px] pt-px tracking-[-0.500px]">ENG</span>
        <div className="ml-[12px] flex w-[80px] flex-col items-center gap-[8px] tracking-[-0.430px]">
          <span>11:55</span>
          <span>29/08/2024</span>
        </div>
        <svg width="73" height="50" viewBox="2487 1390 73 50">
          <path d="M2509 1405h20v15h-12l-4 4v-4h-4z" fill="#fff" />
          <path d="M2513 1409h12M2513 1412.500h12M2513 1416h8" stroke="#2d2d2d" strokeWidth="1.200" />
          <circle cx="2528.500" cy="1424.500" r="10" fill="#2b2b2b" stroke="#9a9a9a" strokeWidth="1" />
          <text x="2528.500" y="1430" textAnchor="middle" fontSize="15" fill="#fff" fontFamily="Noto Sans">1</text>
          <path d="M2554.500 1390v50" stroke="#777" />
        </svg>
      </div>
    </footer>
  );
}

/* ---------- Window ---------- */

export default function App() {
  return (
    <div className="flex h-[1440px] w-[2560px] flex-col overflow-hidden bg-[#eeeeee] font-['Roboto',sans-serif]">
      <header className="flex h-[52px] flex-col bg-white font-['Noto_Sans'] text-[14px] leading-none text-black">
        <div className="flex h-[28px] items-center pl-[3px]">
          <svg width="18" height="18" viewBox="0 0 32 32"><ArtecGem /></svg>
          <span className="ml-[6px] text-[14px] tracking-[0.040px]">Artec Studio 16 Professional</span>
          <svg width="160" height="28" viewBox="2400 0 160 28" fill="none" stroke="#000" strokeWidth="1.200" className="ml-auto">
            <path d="M2405 13.500h12" />
            <path d="M2463.500 10.500h9v9h-9zM2465.500 10v-1.500h9v9h-1.500" />
            <path d="M2522 8.500l11.500 11.500M2533.500 8.500l-11.500 11.500" />
          </svg>
        </div>
        <div className="flex h-[24px] items-center pt-px pl-[9px] tracking-[-0.180px] text-[#1c1c1c]">
          <span className="w-[40px] text-[#8a8a8a]">File</span>
          <span className="w-[43px]">Edit</span>
          <span className="w-[48px]">View</span>
          <span className="w-[73px]">Window</span>
          <span>Feedback &amp; Help</span>
        </div>
      </header>
      <div className="h-[2px] bg-[#e9e9e9]" />
      <div className="flex h-[1306px]">
        <Sidebar />
        <ScanPanel />
        <div className="w-[4px] bg-[#d9d9d9]" />
        <div className="flex flex-1 flex-col">
          <div className="flex h-[1287px]">
            <Viewport />
            <div className="flex w-[19px] items-center justify-center border-l border-[#dcdcdc]">
              <svg width="11" height="10" viewBox="0 0 11 10" fill="none" stroke="#666" strokeWidth="1.200" className="mt-[18px]">
                <path d="M5 1L1.500 5 5 9M9.500 1L6 5l3.500 4" />
              </svg>
            </div>
          </div>
          <div className="flex flex-1 items-center justify-center border-t border-[#dcdcdc]">
            <svg width="10" height="11" viewBox="0 0 10 11" fill="none" stroke="#666" strokeWidth="1.200" className="mr-[18px]">
              <path d="M1 5l4-3.500L9 5M1 9.500L5 6l4 3.500" />
            </svg>
          </div>
        </div>
      </div>
      <div className="flex h-[30px] items-center border-t border-[#d8d8d8] bg-[#f0f0f0] pb-px pl-[4px] text-[16px] leading-none tracking-[-0.100px] text-[#1c1c1c]">
        <span className="w-[156px]">Free RAM: 46947 MB</span>
        <span className="w-[14px]">|</span>
        <span className="w-[226px] tracking-[-0.200px]">Total memory in use: 12157 MB</span>
        <span className="w-[20px]">|</span>
        <span>Ready</span>
      </div>
      <Taskbar />
    </div>
  );
}
